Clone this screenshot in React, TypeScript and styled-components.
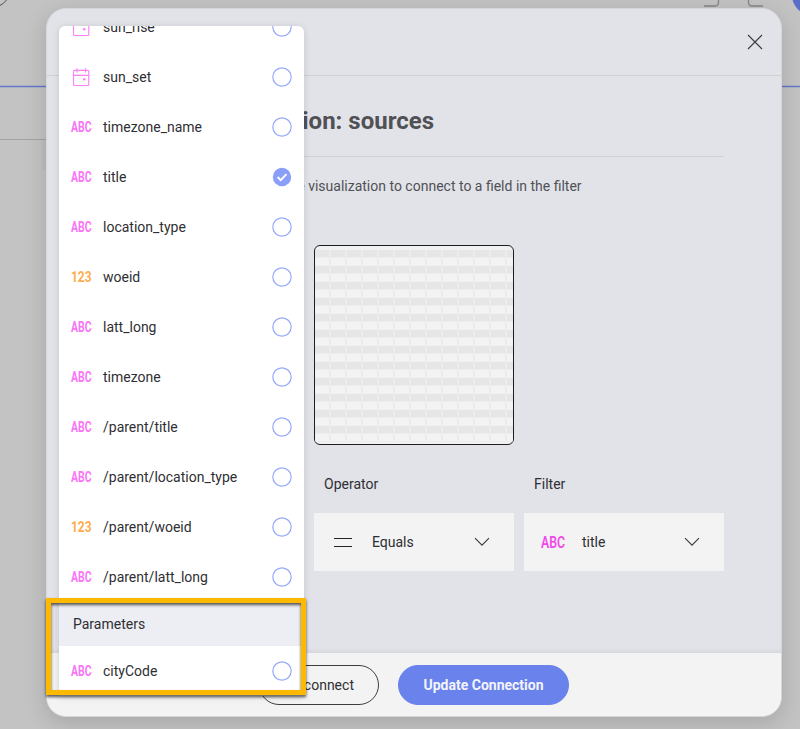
import React from 'react';
import styled, { createGlobalStyle } from 'styled-components';

const GlobalStyle = createGlobalStyle`
  *, *::before, *::after { box-sizing: border-box; }
  body {
    margin: 0;
    overflow: hidden;
    font-family: Roboto, "Liberation Sans", sans-serif;
    font-size: 14px;
    color: #2f2f33;
    background: #c3c3c3;
  }
`;

const Page = styled.main`
  position: relative;
  width: 800px;
  height: 729px;
  padding: 8px 18px 0 46px;
  overflow: hidden;
  background: #c3c3c3;
`;

const Backdrop = styled.svg`
  position: absolute;
  inset: 0;
`;

const Dialog = styled.section`
  position: relative;
  display: flex;
  flex-direction: column;
  width: 736px;
  height: 709px;
  border: 1px solid #d6d7da;
  border-radius: 20px;
  background: #e2e3e9;
  box-shadow: 0 6px 22px rgba(0, 0, 0, 0.15);
`;

const DialogHeader = styled.header`
  display: flex;
  flex: none;
  align-items: center;
  justify-content: flex-end;
  height: 67px;
  padding: 0 18px 0 0;
  border-bottom: 1px solid #cfd0d4;
`;

const IconButton = styled.button`
  display: flex;
  padding: 0;
  border: 0;
  background: none;
`;

const DialogBody = styled.div`
  flex: 1;
  display: flex;
  flex-direction: column;
  padding: 0 57px;
  box-shadow: inset 0 -4px 5px -3px rgba(0, 0, 0, 0.08);
`;

const Title = styled.h1`
  display: flex;
  align-items: center;
  height: 81px;
  margin: 0;
  padding-top: 9px;
  border-bottom: 1px solid #cfd0d4;
  font-size: 24px;
  font-weight: 700;
  color: #505155;
`;

const TitleText = styled.span`
  width: 330px;
  text-align: right;
  white-space: nowrap;
`;

const Description = styled.p`
  width: 477.6px;
  height: 88px;
  margin: 0;
  padding-top: 20px;
  line-height: 18px;
  text-align: right;
  color: #505155;
`;

const Columns = styled.div`
  display: grid;
  grid-template-columns: repeat(3, 200px);
  column-gap: 10px;
`;

const Preview = styled.div`
  grid-column: 2;
  height: 200px;
  padding-top: 4px;
  border: 1px solid #1e1e20;
  border-radius: 6px;
  background: #f1f1f1;
  overflow: hidden;
`;

const PreviewRow = styled.div<{ $dark: boolean }>`
  height: 8px;
  border-bottom: 1px solid ${p => (p.$dark ? '#ececec' : '#eeeeee')};
  background:
    repeating-linear-gradient(90deg, transparent 0 14px, #ececec 14px 16px),
    ${p => (p.$dark ? '#e6e6e6' : '#f3f3f3')};
`;

const Field = styled.div<{ $column: number }>`
  grid-column: ${p => p.$column};
  display: flex;
  flex-direction: column;
  padding-top: 10px;
`;

const FieldLabel = styled.span`
  height: 58px;
  padding: 20px 10px 0;
  line-height: 18px;
`;

const SelectBox = styled.button`
  display: flex;
  align-items: center;
  height: 58px;
  padding: 0 24px 0 16px;
  border: 0;
  background: #f3f3f3;
  font: inherit;
  color: inherit;
`;

const SelectIcon = styled.span`
  display: flex;
  width: 42px;
`;

const SelectValue = styled.span`
  flex: 1;
  text-align: left;
`;

const DialogFooter = styled.footer`
  display: flex;
  flex: none;
  align-items: center;
  justify-content: center;
  gap: 19px;
  height: 63px;
  padding-top: 1px;
  border-radius: 0 0 19px 19px;
  background: #f3f3f3;
`;

const PillButton = styled.button<{ $primary?: boolean }>`
  width: ${p => (p.$primary ? '171px' : '120px')};
  height: 40px;
  padding: 0;
  border: 1px solid ${p => (p.$primary ? '#6982ec' : '#3d3d40')};
  border-radius: 20px;
  background: ${p => (p.$primary ? '#6982ec' : 'transparent')};
  font: inherit;
  font-weight: ${p => (p.$primary ? 700 : 400)};
  color: ${p => (p.$primary ? '#f3f4fb' : '#2f2f33')};
`;

const Menu = styled.div`
  position: absolute;
  top: 17px;
  left: 12px;
  display: flex;
  flex-direction: column;
  justify-content: flex-end;
  width: 245px;
  height: 670px;
  border-radius: 6px 6px 0 0;
  background: #fff;
  box-shadow: 0 1px 7px rgba(0, 0, 0, 0.13);
  overflow: hidden;
`;

const MenuRow = styled.div`
  display: flex;
  flex: none;
  align-items: center;
  height: 50px;
  padding: 0 12px;
`;

const RowIcon = styled.span`
  display: flex;
  width: 32px;
`;

const RowLabel = styled.span`
  flex: 1;
`;

const MenuHeading = styled.div`
  display: flex;
  flex: none;
  align-items: center;
  height: 44px;
  padding: 0 14px;
  background: #edeef4;
`;

const Highlight = styled.div`
  position: absolute;
  top: 598px;
  left: 46px;
  width: 260px;
  height: 97px;
  border: 5px solid #fdb900;
  filter: drop-shadow(0 2px 1.5px rgba(0, 0, 0, 0.65));
`;

const Glyph = styled.svg`
  overflow: visible;
`;

type Kind = 'date' | 'text' | 'number';

function CalendarIcon() {
  return (
    <svg width="20" height="20" viewBox="0 0 20 20" fill="none" stroke="#fb82f8" strokeWidth="1.15">
      <rect x="2.5" y="3.3" width="15.3" height="15.2" rx="1" />
      <path d="M2.5 8.3H17.8M6 1.2v4.3M14.5 1.2v4.3" />
      <circle cx="13.3" cy="12.3" r="1.3" fill="#fb82f8" stroke="none" />
    </svg>
  );
}

function TypeIcon({ kind, large = false }: { kind: Kind; large?: boolean }) {
  if (kind === 'date') return <CalendarIcon />;
  const label = kind === 'text' ? 'ABC' : '123';
  const color = kind === 'number' ? '#fdad4c' : large ? '#f148ec' : '#fb74f8';
  return (
    <Glyph width={large ? 26 : 22} height="20">
      <text
        x={large ? 1 : 0}
        y={large ? 16 : 15}
        fontSize={large ? 16 : 14}
        fontWeight={large ? 600 : 700}
        fill={color}
        textLength={large ? 24 : 20.5}
        lengthAdjust="spacingAndGlyphs"
      >
        {label}
      </text>
    </Glyph>
  );
}

function Radio({ checked = false }: { checked?: boolean }) {
  return (
    <svg width="20" height="20" viewBox="0 0 20 20" fill="none">
      {checked ? (
        <>
          <circle cx="10" cy="10" r="9.2" fill="#8aa0f8" />
          <path d="M5.6 10l3.1 3.1 5.8-6" stroke="#fff" strokeWidth="1.9" />
        </>
      ) : (
        <circle cx="10" cy="10" r="9.2" stroke="#96a9fa" strokeWidth="1.2" />
      )}
    </svg>
  );
}

function Chevron() {
  return (
    <svg width="16" height="10" viewBox="0 0 16 10" fill="none" stroke="#39393c" strokeWidth="1.1">
      <path d="M1 1.2l7 7 7-7" />
    </svg>
  );
}

interface Option {
  name: string;
  kind: Kind;
  checked?: boolean;
}

const fields: Option[] = [
  { name: 'sun_rise', kind: 'date' },
  { name: 'sun_set', kind: 'date' },
  { name: 'timezone_name', kind: 'text' },
  { name: 'title', kind: 'text', checked: true },
  { name: 'location_type', kind: 'text' },
  { name: 'woeid', kind: 'number' },
  { name: 'latt_long', kind: 'text' },
  { name: 'timezone', kind: 'text' },
  { name: '/parent/title', kind: 'text' },
  { name: '/parent/location_type', kind: 'text' },
  { name: '/parent/woeid', kind: 'number' },
  { name: '/parent/latt_long', kind: 'text' },
];

function OptionRow({ name, kind, checked }: Option) {
  return (
    <MenuRow>
      <RowIcon><TypeIcon kind={kind} /></RowIcon>
      <RowLabel>{name}</RowLabel>
      <Radio checked={checked} />
    </MenuRow>
  );
}

export default function App() {
  return (
    <Page>
      <GlobalStyle />
      <Backdrop width="800" height="729" fill="none">
        <path d="M0 86.5H800" stroke="#6377cb" strokeWidth="1.5" />
        <path d="M0 139.5H46" stroke="#a2a2a2" />
        <path d="M42 140h4v30h-4z" fill="#bebebe" />
        <path d="M0 5.5Q4 3.5 6.5 0" stroke="#555" />
        <path d="M704 6H715Q718.5 6 718.5 2V0M748.5 0V2Q748.5 6 752 6H763" stroke="#858585" strokeWidth="1.3" />
        <circle cx="812" cy="-5" r="20" fill="#596dc9" />
      </Backdrop>
      <Dialog>
        <DialogHeader>
          <IconButton aria-label="Close">
            <svg width="16" height="16" viewBox="0 0 16 16" stroke="#39393c" strokeWidth="1.1">
              <path d="M1 1l14 14M15 1L1 15" />
            </svg>
          </IconButton>
        </DialogHeader>
        <DialogBody>
          <Title><TitleText>Edit Connection: sources</TitleText></Title>
          <Description>Select a field in the visualization to connect to a field in the filter</Description>
          <Columns>
            <Preview>
              {Array.from({ length: 24 }, (_, i) => <PreviewRow key={i} $dark={i % 2 === 0} />)}
            </Preview>
            <Field $column={2}>
              <FieldLabel>Operator</FieldLabel>
              <SelectBox>
                <SelectIcon>
                  <svg width="26" height="20" stroke="#252528" strokeWidth="1.2">
                    <path d="M4 6.5H22M4 14.5H22" />
                  </svg>
                </SelectIcon>
                <SelectValue>Equals</SelectValue>
                <Chevron />
              </SelectBox>
            </Field>
            <Field $column={3}>
              <FieldLabel>Filter</FieldLabel>
              <SelectBox>
                <SelectIcon><TypeIcon kind="text" large /></SelectIcon>
                <SelectValue>title</SelectValue>
                <Chevron />
              </SelectBox>
            </Field>
          </Columns>
        </DialogBody>
        <DialogFooter>
          <PillButton>Disconnect</PillButton>
          <PillButton $primary>Update Connection</PillButton>
        </DialogFooter>
        <Menu>
          {fields.map(field => <OptionRow key={field.name} {...field} />)}
          <MenuHeading>Parameters</MenuHeading>
          <OptionRow name="cityCode" kind="text" />
        </Menu>
      </Dialog>
      <Highlight />
    </Page>
  );
}
